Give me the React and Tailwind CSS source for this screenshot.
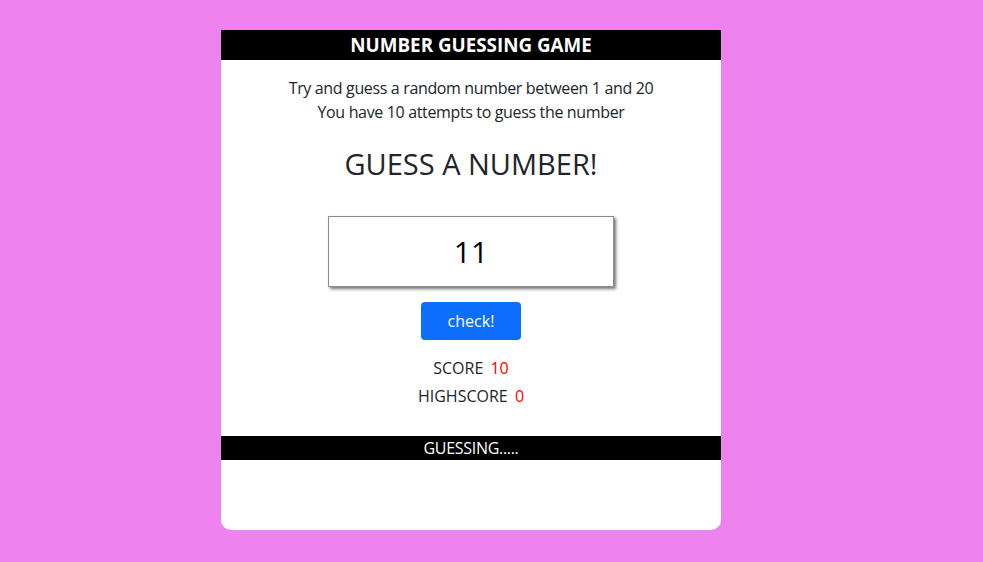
import React from "react";

export default function App() {
  return (
    <div
      className="w-full min-h-[562px] bg-[#ee82ee] flex justify-start pl-[221px] pt-[30px]"
      style={{ fontFamily: '"Open Sans", "Noto Sans", sans-serif' }}
    >
      <div className="w-[500px] h-[500px] bg-white rounded-b-[10px] flex flex-col items-center text-[#212529]">
        <div className="w-full h-[30px] bg-black text-white font-bold text-[18.8px] flex items-center justify-center">
          NUMBER GUESSING GAME
        </div>
        <div className="mt-[16px] text-[16px] leading-[24px] text-center tracking-[-0.35px]">
          <p>Try and guess a random number between 1 and 20</p>
          <p>You have 10 attempts to guess the number</p>
        </div>
        <h1 className="mt-[23px] text-[29px] leading-[34px] font-normal">GUESS A NUMBER!</h1>
        <input
          type="text"
          defaultValue="11"
          readOnly
          className="mt-[35px] w-[286px] h-[71px] border border-[#8a8a95] bg-white text-center text-[30px] text-black shadow-[2px_2px_3px_rgba(0,0,0,0.55)] outline-none"
        />
        <button className="mt-[15px] w-[100px] h-[38px] rounded-[4px] bg-[#0d6efd] text-white text-[16px]">
          check!
        </button>
        <div className="mt-[14px] text-[16px] leading-[28px] text-center">
          <p>
            SCORE <span className="ml-[3px] text-[#ff0000]">10</span>
          </p>
          <p>
            HIGHSCORE <span className="ml-[3px] text-[#ff0000]">0</span>
          </p>
        </div>
        <div className="mt-[26px] w-full h-[24px] bg-black text-white text-[16px] tracking-[-0.3px] flex items-center justify-center">
          GUESSING.....
        </div>
      </div>
    </div>
  );
}
